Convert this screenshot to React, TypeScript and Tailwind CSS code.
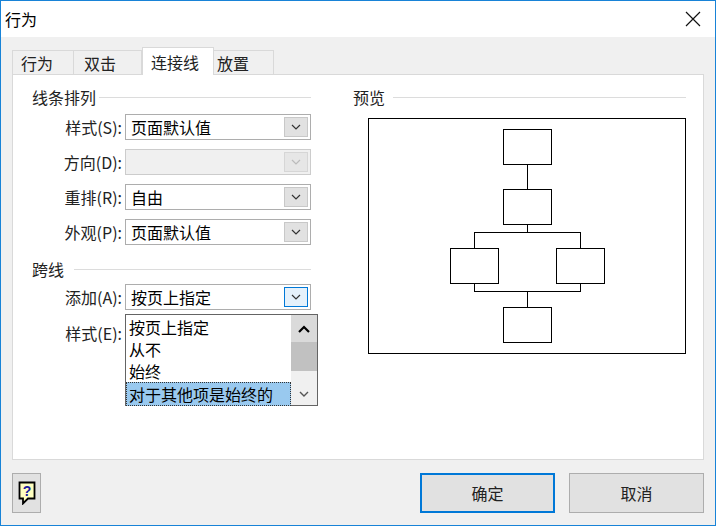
import React from "react"

const font = { fontFamily: '"Noto Sans CJK SC", "Liberation Serif", serif' }

function Chevron({ color = "#333" }: { color?: string }) {
  return (
    <svg width="10" height="6" viewBox="0 0 10 6">
      <path d="M1 1l4 4 4-4" fill="none" stroke={color} strokeWidth="1.2" />
    </svg>
  )
}

function Combo({ value, disabled, active }: { value?: string; disabled?: boolean; active?: boolean }) {
  return (
    <div
      className={`flex h-[26px] w-[186px] items-center border ${
        disabled ? "border-[#cccccc] bg-[#f0f0f0]" : "border-[#adadad] bg-white"
      }`}
    >
      <span className="flex-1 truncate pl-[5px] text-[16px] leading-[24px] text-[#000]">{value}</span>
      <div
        className={`mr-[2px] flex h-[20px] w-[24px] items-center justify-center border ${
          active ? "border-[#0078d7] bg-[#e5f1fb]" : disabled ? "border-[#d6d6d6] bg-[#e6e6e6]" : "border-[#c8c8c8] bg-[#e1e1e1]"
        }`}
      >
        <Chevron color={disabled ? "#bbb" : "#333"} />
      </div>
    </div>
  )
}

function Row({ label, children }: { label: string; children: React.ReactNode }) {
  return (
    <div className="flex items-center">
      <span className="w-[93px] whitespace-nowrap pr-[3px] text-right text-[16px] text-[#222]">{label}</span>
      {children}
    </div>
  )
}

function Box() {
  return <div className="h-[36px] w-[49px] border border-black bg-white" />
}

export default function App() {
  return (
    <div style={font} className="h-[526px] w-[716px] overflow-hidden border border-[#1883d7] bg-[#f0f0f0]">
      {/* title bar */}
      <div className="flex h-[36px] items-center justify-between bg-white pl-[4px] pr-[14px]">
        <span className="text-[16px] text-black">行为</span>
        <svg width="16" height="16" viewBox="0 0 16 16">
          <path d="M1 1l14 14M15 1L1 15" stroke="#111" strokeWidth="1.2" />
        </svg>
      </div>

      <div className="px-[11px] pt-[10px]">
        {/* tabs */}
        <div className="flex h-[27px] items-end text-[16px] text-[#222]">
          <div className="flex h-[24px] w-[62px] items-center border border-b-0 border-[#d9d9d9] bg-[#f0f0f0] pl-[8px]">行为</div>
          <div className="flex h-[24px] w-[68px] items-center border border-b-0 border-l-0 border-[#d9d9d9] bg-[#f0f0f0] pl-[10px]">双击</div>
          <div className="relative z-10 -mb-px flex h-[28px] w-[72px] items-center border border-b-0 border-[#d9d9d9] bg-white pl-[8px]">连接线</div>
          <div className="flex h-[24px] w-[60px] items-center border border-b-0 border-l-0 border-[#d9d9d9] bg-[#f0f0f0] pl-[3px]">放置</div>
        </div>

        {/* panel */}
        <div className="relative flex h-[386px] border border-[#d9d9d9] bg-white pl-[19px] pr-[17px] pt-[10px]">
          <div className="w-[279px]">
            <div className="flex items-center gap-[3px]">
              <span className="text-[16px] text-[#222]">线条排列</span>
              <div className="h-px flex-1 bg-[#dcdcdc]" />
            </div>
            <div className="mt-[5px] flex flex-col gap-[9px]">
              <Row label="样式(S):"><Combo value="页面默认值" /></Row>
              <Row label="方向(D):"><Combo disabled /></Row>
              <Row label="重排(R):"><Combo value="自由" /></Row>
              <Row label="外观(P):"><Combo value="页面默认值" /></Row>
            </div>
            <div className="mt-[12px] flex items-center gap-[10px]">
              <span className="text-[16px] text-[#222]">跨线</span>
              <div className="h-px flex-1 bg-[#dcdcdc]" />
            </div>
            <div className="mt-[3px] flex flex-col gap-[10px]">
              <Row label="添加(A):"><Combo value="按页上指定" active /></Row>
              <Row label="样式(E):"><div className="h-[26px]" /></Row>
            </div>
          </div>

          <div className="ml-[42px] flex-1">
            <div className="flex items-center gap-[8px]">
              <span className="text-[16px] text-[#222]">预览</span>
              <div className="h-px flex-1 bg-[#dcdcdc]" />
            </div>
            <div className="ml-[15px] mt-[9px] flex h-[236px] w-[318px] flex-col items-center border border-black bg-white pt-[10px]">
              <Box />
              <div className="h-[24px] w-px bg-black" />
              <Box />
              <div className="h-[7px] w-px bg-black" />
              <div className="flex w-[155px] flex-col">
                <div className="mx-auto h-px w-[107px] bg-black" />
                <div className="flex justify-between">
                  <div className="flex w-[49px] flex-col items-center">
                    <div className="h-[15px] w-px bg-black" />
                    <Box />
                    <div className="h-[7px] w-px bg-black" />
                  </div>
                  <div className="flex w-[49px] flex-col items-center">
                    <div className="h-[15px] w-px bg-black" />
                    <Box />
                    <div className="h-[7px] w-px bg-black" />
                  </div>
                </div>
                <div className="mx-auto h-px w-[107px] bg-black" />
              </div>
              <div className="h-[15px] w-px bg-black" />
              <Box />
            </div>
          </div>

          {/* dropdown list */}
          <div className="absolute left-[112px] top-[239px] flex h-[92px] w-[193px] border border-[#646464] bg-white text-[16px] leading-[22px] text-black">
            <div className="flex-1 pt-[1px]">
              <div className="pl-[3px]">按页上指定</div>
              <div className="pl-[3px]">从不</div>
              <div className="pl-[3px]">始终</div>
              <div className="whitespace-nowrap border border-dotted border-[#333] bg-[#99c9ef] pl-[2px]">对于其他项是始终的</div>
            </div>
            <div className="flex w-[26px] flex-col bg-[#f0f0f0]">
              <div className="flex h-[27px] items-center justify-center bg-[#dadada]">
                <svg width="12" height="8" viewBox="0 0 12 8"><path d="M1 7l5-5 5 5" fill="none" stroke="#000" strokeWidth="2.2" /></svg>
              </div>
              <div className="h-[29px] bg-[#c1c1c1]" />
              <div className="flex-1" />
              <div className="flex h-[22px] items-center justify-center">
                <svg width="10" height="6" viewBox="0 0 10 6"><path d="M1 1l4 4 4-4" fill="none" stroke="#555" strokeWidth="1.4" /></svg>
              </div>
            </div>
          </div>
        </div>

        {/* buttons */}
        <div className="mt-[13px] flex items-center">
          <div className="flex h-[40px] w-[29px] items-center justify-center border border-[#adadad] bg-[#e1e1e1]">
            <svg width="18" height="24" viewBox="0 0 18 24">
              <path d="M1.5 1.5h15v16H10l-5 5v-5H1.5z" fill="#ffffc0" stroke="#000" strokeWidth="1.8" />
              <text x="9" y="15" textAnchor="middle" fontSize="14" fontWeight="bold" fill="#1a1aa0" fontFamily="Liberation Sans, sans-serif">?</text>
            </svg>
          </div>
          <div className="flex-1" />
          <div className="flex h-[40px] w-[135px] items-center justify-center border-2 border-[#0078d7] bg-[#e1e1e1] text-[16px] text-[#222]">确定</div>
          <div className="ml-[14px] flex h-[40px] w-[135px] items-center justify-center border border-[#adadad] bg-[#e1e1e1] text-[16px] text-[#222]">取消</div>
        </div>
      </div>
    </div>
  )
}
